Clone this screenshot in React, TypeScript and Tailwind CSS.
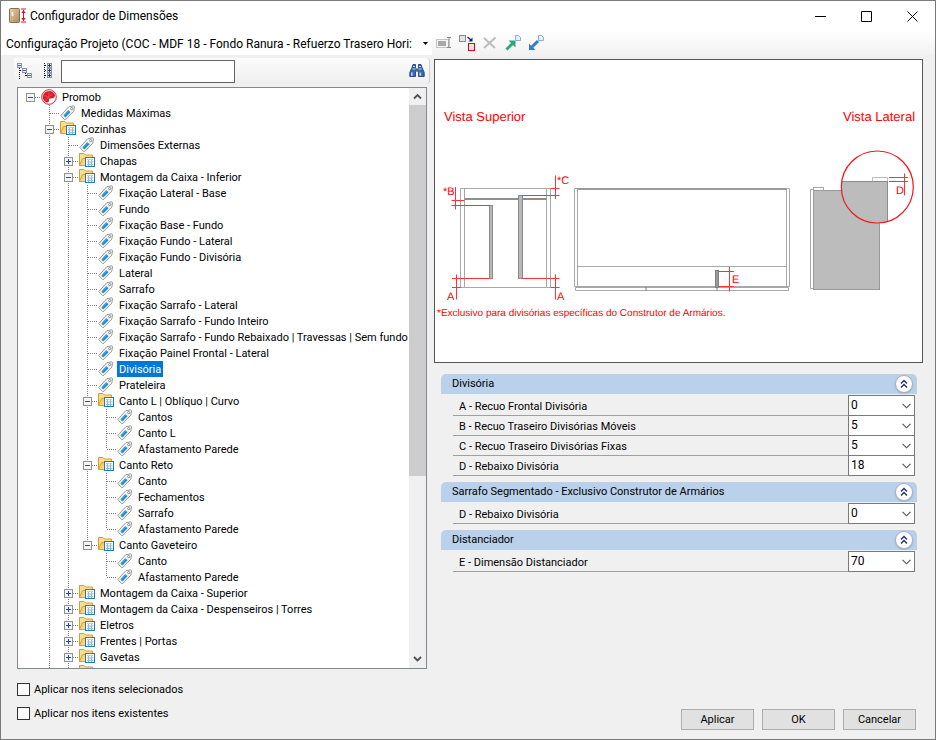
import React, { useState } from "react";

type Row = {
  depth: number;
  kind: "root" | "folder" | "tag";
  label: string;
  box?: "plus" | "minus";
};

const rows: Row[] = [
  { depth: 0, kind: "root", label: "Promob", box: "minus" },
  { depth: 1, kind: "tag", label: "Medidas Máximas" },
  { depth: 1, kind: "folder", label: "Cozinhas", box: "minus" },
  { depth: 2, kind: "tag", label: "Dimensões Externas" },
  { depth: 2, kind: "folder", label: "Chapas", box: "plus" },
  { depth: 2, kind: "folder", label: "Montagem da Caixa - Inferior", box: "minus" },
  { depth: 3, kind: "tag", label: "Fixação Lateral - Base" },
  { depth: 3, kind: "tag", label: "Fundo" },
  { depth: 3, kind: "tag", label: "Fixação Base - Fundo" },
  { depth: 3, kind: "tag", label: "Fixação Fundo - Lateral" },
  { depth: 3, kind: "tag", label: "Fixação Fundo - Divisória" },
  { depth: 3, kind: "tag", label: "Lateral" },
  { depth: 3, kind: "tag", label: "Sarrafo" },
  { depth: 3, kind: "tag", label: "Fixação Sarrafo - Lateral" },
  { depth: 3, kind: "tag", label: "Fixação Sarrafo - Fundo Inteiro" },
  { depth: 3, kind: "tag", label: "Fixação Sarrafo - Fundo Rebaixado | Travessas | Sem fundo" },
  { depth: 3, kind: "tag", label: "Fixação Painel Frontal - Lateral" },
  { depth: 3, kind: "tag", label: "Divisória" },
  { depth: 3, kind: "tag", label: "Prateleira" },
  { depth: 3, kind: "folder", label: "Canto L | Oblíquo | Curvo", box: "minus" },
  { depth: 4, kind: "tag", label: "Cantos" },
  { depth: 4, kind: "tag", label: "Canto L" },
  { depth: 4, kind: "tag", label: "Afastamento Parede" },
  { depth: 3, kind: "folder", label: "Canto Reto", box: "minus" },
  { depth: 4, kind: "tag", label: "Canto" },
  { depth: 4, kind: "tag", label: "Fechamentos" },
  { depth: 4, kind: "tag", label: "Sarrafo" },
  { depth: 4, kind: "tag", label: "Afastamento Parede" },
  { depth: 3, kind: "folder", label: "Canto Gaveteiro", box: "minus" },
  { depth: 4, kind: "tag", label: "Canto" },
  { depth: 4, kind: "tag", label: "Afastamento Parede" },
  { depth: 2, kind: "folder", label: "Montagem da Caixa - Superior", box: "plus" },
  { depth: 2, kind: "folder", label: "Montagem da Caixa - Despenseiros | Torres", box: "plus" },
  { depth: 2, kind: "folder", label: "Eletros", box: "plus" },
  { depth: 2, kind: "folder", label: "Frentes | Portas", box: "plus" },
  { depth: 2, kind: "folder", label: "Gavetas", box: "plus" },
  { depth: 2, kind: "folder", label: "", box: "plus" },
];

const groups = [
  {
    title: "Divisória",
    fields: [
      { label: "A - Recuo Frontal Divisória", value: "0" },
      { label: "B - Recuo Traseiro Divisórias Móveis", value: "5" },
      { label: "C - Recuo Traseiro Divisórias Fixas", value: "5" },
      { label: "D - Rebaixo Divisória", value: "18" },
    ],
  },
  {
    title: "Sarrafo Segmentado - Exclusivo Construtor de Armários",
    fields: [{ label: "D - Rebaixo Divisória", value: "0" }],
  },
  {
    title: "Distanciador",
    fields: [{ label: "E - Dimensão Distanciador", value: "70" }],
  },
];

// true when another row of the same level comes after this one
function continues(index: number, level: number) {
  if (level === 0) return false;
  for (let i = index + 1; i < rows.length; i++) {
    if (rows[i].depth < level) return false;
    if (rows[i].depth === level) return true;
  }
  return true;
}

function Guide({ line }: { line: boolean }) {
  return (
    <svg className="w-[19px] h-4 shrink-0" viewBox="0 0 19 16" shapeRendering="crispEdges">
      {line && <path d="M9.5 0V16" stroke="#808080" strokeDasharray="1 1" />}
    </svg>
  );
}

function Joint({ row, down }: { row: Row; down: boolean }) {
  return (
    <svg className="w-[19px] h-4 shrink-0" viewBox="0 0 19 16" shapeRendering="crispEdges">
      {row.depth > 0 && (
        <path d={down ? "M9.5 0V16" : "M9.5 0V8"} stroke="#808080" strokeDasharray="1 1" />
      )}
      <path d="M10 8.5H19" stroke="#808080" strokeDasharray="1 1" />
      {row.box && (
        <>
          <rect x="5.5" y="4.5" width="8" height="8" fill="#f4f4f4" stroke="#919191" />
          <path d="M7 8.5H12" stroke="#2f4a9c" />
          {row.box === "plus" && <path d="M9.5 6V11" stroke="#2f4a9c" />}
        </>
      )}
    </svg>
  );
}

function RootIcon() {
  return (
    <svg className="w-[18px] h-4 shrink-0 overflow-visible" viewBox="0 0 18 16">
      <circle cx="9" cy="8" r="7.3" fill="#fff" stroke="#dc2430" strokeWidth="1" />
      <path
        d="M9.2 2C5.5 2 2.800 4.800 2.800 8c0 2.600 1.500 4.500 3.300 5.300 2 .9 3.400-.6 2.900-2.500-.2-1 .4-1.500 1.400-1.300 2.300.4 4.600-.9 4.600-2.900 0-2.400-2.700-4.600-5.800-4.600z"
        fill="#d81f2c"
      />
      <path d="M9.300 2.500L8.500 8M3.500 6.500L8.500 8 5 12M8.500 8l5-3.500" stroke="#e8707a" strokeWidth=".5" fill="none" />
    </svg>
  );
}

function FolderIcon() {
  return (
    <svg className="w-[18px] h-4 shrink-0 overflow-visible" viewBox="0 0 18 16">
      <path d="M1.500 12.500V.5H6l1.500 1.500H14.500v10.500z" fill="#fbe08c" stroke="#d69a3a" />
      <path d="M1.500 12.500L4.500 5.500H14.500" fill="#f9d469" stroke="#d69a3a" />
      <rect x="7.500" y="4.500" width="9" height="9" fill="#fff" stroke="#157fbf" />
      <path d="M9 6.500H15" stroke="#f4ca62" />
      <path d="M10.500 7v6M13.500 7v6M9 9h6.500M9 11.500h6.500" stroke="#8fb7da" />
    </svg>
  );
}

function TagIcon() {
  return (
    <svg className="w-[18px] h-4 shrink-0 overflow-visible" viewBox="0 0 18 16">
      <path d="M1.800 10.500L9.800 1.700 14.900.800 15.600 1.600 14.800 6.200 6.800 14.500 5.600 14.600z" fill="#f3f3f3" stroke="#909090" strokeWidth=".9" />
      <path d="M4.300 10.300L9.300 5.100 11.600 7.300 6.500 12.400z" fill="#35a0de" />
      <path d="M5.700 11.700L10.500 6.700" stroke="#1a6fb3" strokeWidth=".8" />
      <circle cx="12.700" cy="3.600" r="1.100" fill="#fff" stroke="#777" strokeWidth=".8" />
    </svg>
  );
}

function TreeRow({ row, index, selected, onSelect }: { row: Row; index: number; selected: boolean; onSelect: () => void }) {
  return (
    <li className="flex h-4 items-center">
      {Array.from({ length: row.depth }, (_, level) => (
        <Guide key={level} line={continues(index, level)} />
      ))}
      <Joint row={row} down={continues(index, row.depth)} />
      {row.kind === "root" && <RootIcon />}
      {row.kind === "folder" && <FolderIcon />}
      {row.kind === "tag" && <TagIcon />}
      {row.label && (
        <button
          type="button"
          onClick={onSelect}
          className={
            selected
              ? "ml-[2px] h-4 px-[2px] leading-[18px] whitespace-nowrap bg-[#0078d7] text-white"
              : "ml-[2px] h-4 px-[2px] leading-[18px] whitespace-nowrap"
          }
        >
          {row.label}
        </button>
      )}
    </li>
  );
}

function TitleBar() {
  return (
    <header className="flex h-[30px] shrink-0 items-center bg-white pl-2 text-xs">
      <svg className="w-[18px] h-4" viewBox="0 0 18 16">
        <defs>
          <linearGradient id="wood" x1="0" x2="1" y1="0" y2="1">
            <stop offset="0" stopColor="#e6cfae" />
            <stop offset="1" stopColor="#b08a5e" />
          </linearGradient>
        </defs>
        <rect x=".5" y=".5" width="10" height="14" rx="1" fill="url(#wood)" stroke="#8d6c48" />
        <path d="M3.500 4v4" stroke="#fff" strokeWidth="1.400" />
        <path d="M12 1h5M12 14h5M14.500 2v11" stroke="#d8152b" />
        <path d="M12.300 5l2.200-3 2.200 3zM12.300 10l2.200 3 2.200-3z" fill="#d8152b" />
      </svg>
      <h1 className="ml-[3px] flex-1">Configurador de Dimensões</h1>
      <button type="button" aria-label="Minimizar" className="flex h-full w-[46px] items-center justify-center">
        <svg className="size-[11px]" viewBox="0 0 11 11"><path d="M0 5.500H11" stroke="#000" /></svg>
      </button>
      <button type="button" aria-label="Maximizar" className="flex h-full w-[46px] items-center justify-center">
        <svg className="size-[11px]" viewBox="0 0 11 11"><path d="M.5.5h10v10H.5z" stroke="#000" fill="none" /></svg>
      </button>
      <button type="button" aria-label="Fechar" className="flex h-full w-[46px] items-center justify-center">
        <svg className="size-[11px]" viewBox="0 0 11 11"><path d="M.5.5l10 10M10.500.5l-10 10" stroke="#000" /></svg>
      </button>
    </header>
  );
}

function ToolBar() {
  return (
    <div className="flex h-6 shrink-0 items-center bg-gradient-to-b from-white to-[#f2f2f2]">
      <div className="relative h-full w-[431px] bg-white">
        <select aria-label="Configuração" className="h-full w-full appearance-none overflow-hidden bg-white pl-[5px] pr-5 pt-px text-xs">
          <option>Configuração Projeto (COC - MDF 18 - Fondo Ranura - Refuerzo Trasero Hori:</option>
        </select>
        <svg className="pointer-events-none absolute right-1 top-[11px] h-[3px] w-[5px]" viewBox="0 0 5 3"><path d="M0 0h5L2.500 3z" /></svg>
      </div>
      <div className="flex items-center gap-[7px] pl-1">
        <button type="button" aria-label="Renomear">
          <svg className="block size-4" viewBox="0 0 16 16">
            <rect x=".5" y="4.500" width="12" height="8" fill="#f4f4f4" stroke="#c4c4c4" />
            <rect x="2" y="6" width="8" height="5" fill="#a8a8a8" />
            <path d="M11 2.500h4M11 12.500h4M13 3v9" stroke="#8a8a8a" />
          </svg>
        </button>
        <button type="button" aria-label="Substituir">
          <svg className="block size-4" viewBox="0 0 16 16">
            <rect x=".5" y=".5" width="6" height="6" fill="#e4e4e6" stroke="#8a8a8e" />
            <path d="M8.500 2l4 3.500" stroke="#14206e" strokeWidth="1.200" fill="none" />
            <path d="M13.500 2.500v4h-4z" fill="#14206e" />
            <rect x="9.500" y="8.500" width="6" height="7" fill="#e8e4e4" stroke="#e00014" />
          </svg>
        </button>
        <button type="button" aria-label="Excluir">
          <svg className="block size-4" viewBox="0 0 16 16"><path d="M2 3l11 10M13.500 2.500L2 13" stroke="#bcbcbc" strokeWidth="2" /></svg>
        </button>
        <button type="button" aria-label="Exportar">
          <svg className="block size-4" viewBox="0 0 16 16">
            <path d="M1.500 14.500l6-6" stroke="#2fa57a" strokeWidth="3" />
            <path d="M3.500 5.500h7v7z" fill="#2fa57a" />
            <path d="M10.500.5h3l2 2v3h-5z" fill="#e8f0fa" stroke="#8fabd6" />
          </svg>
        </button>
        <button type="button" aria-label="Importar">
          <svg className="block size-4" viewBox="0 0 16 16">
            <path d="M10 6l-6 6" stroke="#3579cc" strokeWidth="3" />
            <path d="M1 8.500v6.500h6.500z" fill="#3579cc" />
            <path d="M10.500.5h3l2 2v3h-5z" fill="#e8f0fa" stroke="#8fabd6" />
          </svg>
        </button>
      </div>
    </div>
  );
}

function SearchBar() {
  return (
    <div className="flex h-[26px] shrink-0 items-center rounded-r border-r border-[#cfcfcf] bg-gradient-to-b from-[#fcfcfc] to-[#efefef] pl-[3px] pr-1">
      <button type="button" aria-label="Expandir tudo">
        <svg className="block size-4" viewBox="0 0 16 16" shapeRendering="crispEdges">
          <path d="M2.500 5v11M3 7.500h2M8.500 10v4M9 12.500h2" stroke="#111" strokeDasharray="1 1" />
          <rect x=".5" y=".5" width="4" height="4" fill="#eef2f8" stroke="#8494ae" />
          <rect x="5.500" y="5.500" width="4" height="4" fill="#eef2f8" stroke="#8494ae" />
          <rect x="10.500" y="10.500" width="4" height="4" fill="#eef2f8" stroke="#8494ae" />
          <path d="M1 2.500h3M6 7.500h3M11 12.500h3" stroke="#4e6288" />
        </svg>
      </button>
      <button type="button" aria-label="Recolher tudo" className="ml-[10px]">
        <svg className="block size-4" viewBox="0 0 16 16" shapeRendering="crispEdges">
          <path d="M1.500 0v16M2 2.500h3M2 7.500h3M2 12.500h3" stroke="#111" strokeDasharray="1 1" />
          <rect x="4.500" y=".5" width="4" height="4" fill="#eef2f8" stroke="#8494ae" />
          <rect x="4.500" y="5.500" width="4" height="4" fill="#eef2f8" stroke="#8494ae" />
          <rect x="4.500" y="10.500" width="4" height="4" fill="#eef2f8" stroke="#8494ae" />
          <path d="M5 2.500h3M5 7.500h3M5 12.500h3M6.500 1v3M6.500 6v3M6.500 11v3" stroke="#26344f" />
        </svg>
      </button>
      <input type="text" aria-label="Pesquisar" className="ml-[2px] h-[23px] w-[174px] border border-[#646464] bg-white px-1" />
      <button type="button" aria-label="Localizar" className="ml-auto">
        <svg className="block size-4" viewBox="0 0 16 16">
          <path d="M4 1.500h2.500v3l.8 1.500v2.500L6.500 9v4.500H.8V9.500L3 4.500zM12 1.500H9.500v3L8.700 6v2.500l.8.500v4.500h5.700V9.500L13 4.500z" fill="#3a68ad" stroke="#23437f" strokeWidth=".9" />
          <path d="M4 3.500h2M10 3.500h2M3.500 6h3M9.500 6h3" stroke="#d3e1f3" strokeWidth=".9" />
          <path d="M2.800 9.500v3.300M11.300 9.500v3.300" stroke="#c3d8f2" strokeWidth="1.600" />
        </svg>
      </button>
    </div>
  );
}

function Tree() {
  const [selected, setSelected] = useState(17);

  return (
    <div className="mx-[3px] mt-[3px] flex min-h-0 flex-1 border border-[#828790] bg-white">
      <ul className="min-w-0 flex-1 overflow-hidden pl-[3px] pt-px [text-rendering:geometricPrecision]">
        {rows.map((row, i) => (
          <TreeRow key={i} row={row} index={i} selected={i === selected} onSelect={() => setSelected(i)} />
        ))}
      </ul>
      <div className="flex w-[17px] flex-col bg-[#f0f0f0]">
        <svg className="h-[17px] w-[17px] shrink-0" viewBox="0 0 17 17"><path d="M5 10.500L8.500 7l3.500 3.500" stroke="#505050" strokeWidth="1.800" fill="none" /></svg>
        <div className="h-[64%] bg-[#cdcdcd]" />
        <svg className="mt-auto h-[17px] w-[17px] shrink-0" viewBox="0 0 17 17"><path d="M5 6l3.500 3.500L12 6" stroke="#505050" strokeWidth="1.800" fill="none" /></svg>
      </div>
    </div>
  );
}

function Drawing() {
  return (
    <div className="border border-[#565656] bg-white">
      <svg className="block w-full" viewBox="435 60 487 302" fontFamily="Liberation Sans, sans-serif" textRendering="geometricPrecision">
        <defs>
          <clipPath id="lens">
            <circle cx="877.300" cy="187" r="36" />
          </clipPath>
        </defs>

        {/* top view */}
        <g fill="none" stroke="#a8a8a8">
          <path d="M460.500 188.500H550.500V287.500H460.500zM464.500 188.500V287.500M546.500 188.500V287.500" />
          <path d="M464.500 199H546.500" stroke="#8e8e8e" strokeWidth="2" />
          <rect x="489.500" y="205.500" width="3" height="73" fill="#b8b8b8" stroke="#8a8a8a" />
          <rect x="518.500" y="195.500" width="4" height="83" fill="#b8b8b8" stroke="#8a8a8a" />
        </g>

        {/* cabinet */}
        <g fill="none" stroke="#a8a8a8">
          <path d="M574.500 188.500H789.500V286.500H574.500zM577.500 188.500V286.500M786.500 188.500V286.500" />
          <path d="M577.500 189H786.500" stroke="#9a9a9a" strokeWidth="2" />
          <path d="M577.500 266.500H786.500" />
          <path d="M575.500 287.500H788.500V290.500H575.500z" />
          <path d="M646 287v4M717 287v4" stroke="#808080" />
          <rect x="715.500" y="270.500" width="3" height="17" fill="#999" stroke="#808080" />
        </g>

        {/* side view */}
        <g fill="none" stroke="#a8a8a8">
          <path d="M813.500 189.500H810.500V288.500H813.500" />
          <rect x="813.500" y="187.500" width="10" height="4" />
          <rect x="813.500" y="190.500" width="66" height="99" fill="#bcbcbc" stroke="#999" />
        </g>
        <circle cx="877.300" cy="187" r="36" fill="#fff" />
        <g clipPath="url(#lens)">
          <rect x="840.500" y="181.500" width="47" height="50" fill="#bcbcbc" stroke="#8c8c8c" />
          <path d="M872.500 181V177.500H887.500V181" fill="#fff" stroke="#bbb" />
        </g>
        <circle cx="877.300" cy="187" r="36" fill="none" stroke="#f01818" strokeWidth="1.200" />

        <g fill="none" stroke="#f33">
          <path d="M455.500 187V209.500M451.500 200.500H464.500M451.500 205.500H490" />
          <path d="M555.500 175.500V199M550.500 188.500H559.500M522.500 195.500H559.500" />
          <path d="M456.500 274.500V299.500M452 278.500H490M452 287.500H461" />
          <path d="M555.500 274.500V299.500M522.500 278.500H559.500M550.500 287.500H559.500" />
          <path d="M729.500 267V291.500M719 271.500H734M719 286.500H734" />
          <path d="M889 177.500H908M889 181.500H908M904.500 173.500V195.500" />
        </g>

        <g fill="#ff0000" fontSize="11">
          <text x="443" y="195">*B</text>
          <text x="557" y="184">*C</text>
          <text x="447" y="300">A</text>
          <text x="557" y="300">A</text>
          <text x="732" y="283">E</text>
          <text x="896" y="194">D</text>
          <text x="444" y="121" fontSize="13">Vista Superior</text>
          <text x="843" y="121" fontSize="13">Vista Lateral</text>
          <text x="437" y="316" fontSize="10">*Exclusivo para divisórias específicas do Construtor de Armários.</text>
        </g>
      </svg>
    </div>
  );
}

function Group({ title, fields, id }: { title: string; fields: { label: string; value: string }[]; id: number }) {
  return (
    <section>
      <div className="flex h-5 items-center justify-between rounded-t-[5px] bg-[#b9d1ea] pl-[11px] pr-1">
        <h2>{title}</h2>
        <button type="button" aria-label="Recolher" className="flex size-[18px] items-center justify-center rounded-full border border-[#a9adc0] bg-white shadow-sm">
          <svg className="size-[10px]" viewBox="0 0 10 10"><path d="M2 4.500L5 1.500l3 3M2 8.500l3-3 3 3" stroke="#1f2f6b" strokeWidth="1.400" fill="none" /></svg>
        </button>
      </div>
      <div className="ml-3 mr-[2px] mt-[2px]">
        {fields.map((field, i) => (
          <div key={i} className="flex h-5 items-stretch border-b border-[#a0a0a0]">
            <label htmlFor={`f${id}-${i}`} className="flex-1 pl-[6px] pt-px leading-5">{field.label}</label>
            <div className="relative -my-px w-[67px]">
              <select id={`f${id}-${i}`} className="block h-full w-full appearance-none border border-[#7a7a7a] bg-white pl-[2px] pb-px text-xs">
                <option>{field.value}</option>
              </select>
              <svg className="pointer-events-none absolute right-1 top-2 h-[6px] w-[9px]" viewBox="0 0 9 6"><path d="M.5.800l4 4 4-4" stroke="#505050" strokeWidth="1.100" fill="none" /></svg>
            </div>
          </div>
        ))}
      </div>
    </section>
  );
}

export default function App() {
  return (
    <main className="flex h-screen flex-col border border-[#7a7a7a] bg-[#f0f0f0] font-['Roboto',sans-serif] text-[11px] text-black">
      <TitleBar />
      <ToolBar />
      <div className="flex min-h-0 flex-1 pl-[13px] pr-3 pt-[3px]">
        <div className="flex w-[416px] shrink-0 flex-col">
          <SearchBar />
          <Tree />
        </div>
        <div className="ml-1 min-w-0 flex-1 pt-px">
          <Drawing />
          <div className="ml-[7px] mr-[6px] mt-[11px] flex flex-col gap-[6px]">
            {groups.map((group, i) => (
              <Group key={i} id={i} title={group.title} fields={group.fields} />
            ))}
          </div>
        </div>
      </div>

      <footer className="flex h-[70px] shrink-0 items-end justify-between pb-[9px] pl-4 pr-[19px]">
        <div className="flex flex-col gap-2 pb-[9px]">
          <label className="flex h-4 items-center gap-1">
            <input type="checkbox" className="size-[13px] appearance-none border border-[#333] bg-white checked:bg-[#0078d7]" />
            <span className="pt-[2px]">Aplicar nos itens selecionados</span>
          </label>
          <label className="flex h-4 items-center gap-1">
            <input type="checkbox" className="size-[13px] appearance-none border border-[#333] bg-white checked:bg-[#0078d7]" />
            <span className="pt-[2px]">Aplicar nos itens existentes</span>
          </label>
        </div>
        <div className="flex gap-2">
          <button type="button" className="h-[21px] w-[73px] border border-[#adadad] bg-[#e1e1e1] pt-px">Aplicar</button>
          <button type="button" className="h-[21px] w-[73px] border border-[#adadad] bg-[#e1e1e1] pt-px">OK</button>
          <button type="button" className="h-[21px] w-[73px] border border-[#adadad] bg-[#e1e1e1] pt-px">Cancelar</button>
        </div>
      </footer>
    </main>
  );
}
